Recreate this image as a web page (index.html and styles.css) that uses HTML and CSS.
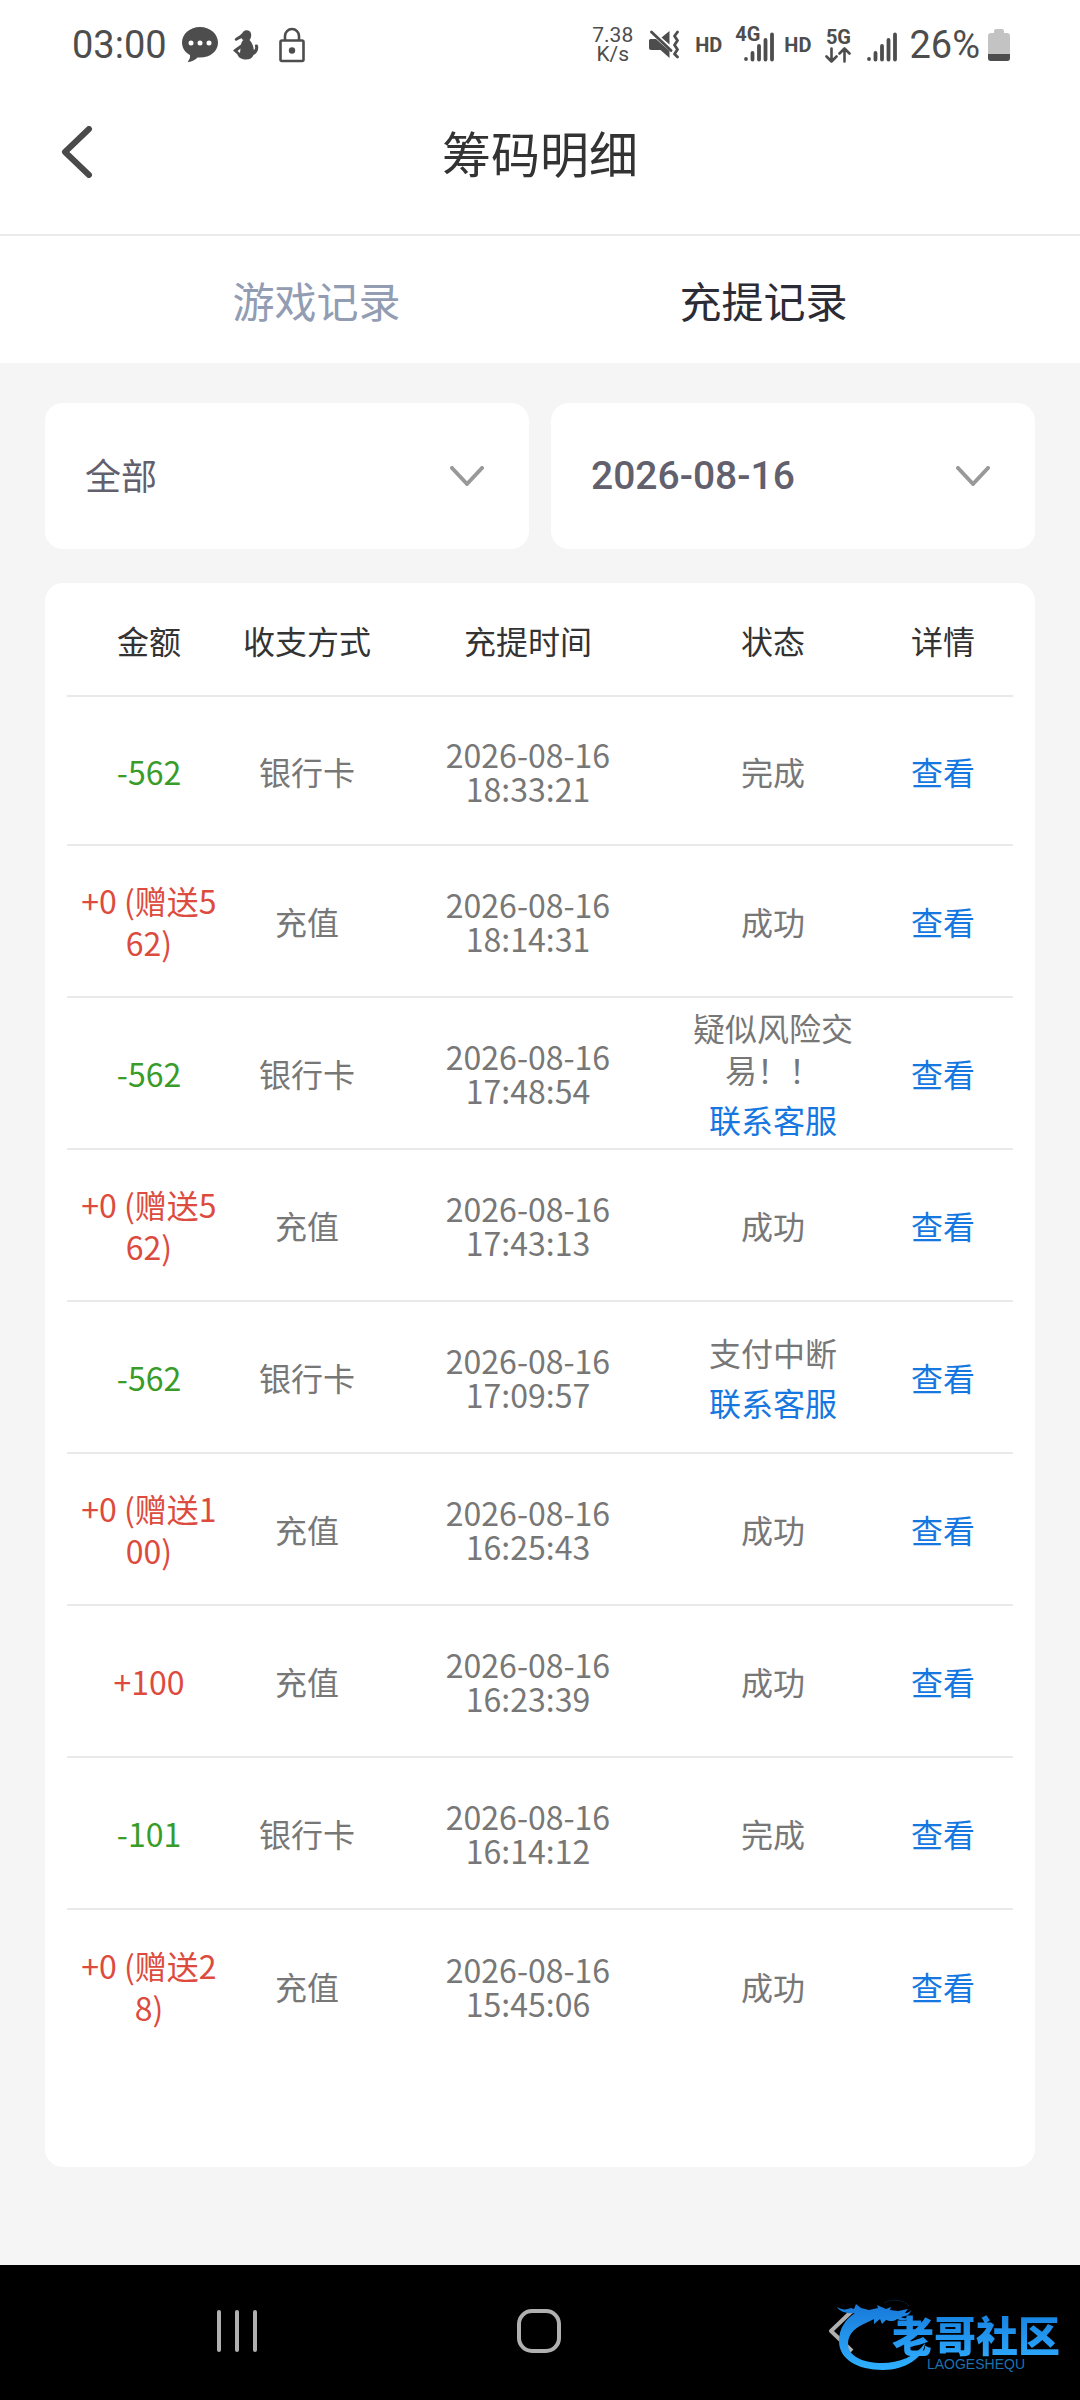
FILE: index.html
```html
<!DOCTYPE html>
<html lang="zh-CN">
<head>
<meta charset="utf-8">
<meta name="viewport" content="width=device-width, initial-scale=1">
<title>筹码明细</title>
<link rel="stylesheet" href="styles.css">
</head>
<body>
<div class="status-bar">
  <div class="status-left">
    <span class="status-time">03:00</span>
    <svg class="icon-chat" width="36" height="36" viewBox="0 0 36 36"><path fill="#4d4d4d" d="M18 0C8 0 0 7 0 15.500c0 5.500 3.200 10 8 12.500.4 2.500-.6 4.500-1.800 6-.4.700 0 1.300.8 1.100 3.800-.9 6.500-2.600 8.500-4.600C27 31.500 36 25 36 15.500 36 7 28 0 18 0z"/><g fill="#fff"><circle cx="9" cy="16" r="2.500"/><circle cx="18" cy="16" r="2.500"/><circle cx="27" cy="16" r="2.500"/></g></svg>
    <svg class="icon-figure" width="26" height="30" viewBox="0 0 26 30"><path fill="#4d4d4d" d="M10 2c2-2.500 7-2.500 8 1.500.5 2.500 0 5-1.500 6.500 2.500 2.500 4 6 4.300 10 1.500-1 1.700-2.500 1-4.500 0-1.500 3-1.500 3.200 0 .8 4-.5 7.500-4.500 9.500-1 3-4 4.500-7.500 4.500-5 0-8-2.500-8.500-5L0 20.500c2-2 5.500-4 8-6 .5-2 1-3.500 2.500-4.500C9 9.500 8.600 9 8.500 8L3 11 1.500 9.500C4 6 7 6.500 10 2zM7.500 18.500L4.500 21 7 23z"/></svg>
    <svg class="icon-lock" width="26" height="36" viewBox="0 0 26 36" fill="none" stroke="#4d4d4d" stroke-width="2.600"><rect x="1.500" y="13.500" width="23" height="20.500" rx="1.500"/><path d="M6 13V9a7 7 0 0 1 14 0v4"/><circle cx="13" cy="23.500" r="3.200" fill="#4d4d4d" stroke="none"/></svg>
  </div>
  <div class="status-right">
    <span class="net-speed">7.38<br>K/s</span>
    <svg class="icon-mute" width="30" height="30" viewBox="0 0 30 30"><path fill="#4d4d4d" d="M12.500 7.500L20.500 1v13.500zM0 10.500C0 9.500 1 9 2 9h5l13.500 12v7l-9-8H2c-1 0-2-.8-2-2z"/><path d="M2.500 2L22 20.500M28.500 2l-3 4 3 4.500-3 4.500 3 4.500-3 4.500 3 3" fill="none" stroke="#4d4d4d" stroke-width="2.800" stroke-linecap="round" stroke-linejoin="round"/></svg>
    <span class="net-tag net-hd">HD</span>
    <span class="signal-4g">
      <svg width="30" height="30" viewBox="0 0 30 30" fill="none" stroke="#4d4d4d" stroke-width="3.800" stroke-linecap="round"><path d="M2 27v.1M8.500 21v6.500M15 14v13.500M21.500 8v19.500M28 2.500v25"/></svg>
      <span class="net-tag signal-4g-label">4G</span>
    </span>
    <span class="net-tag net-hd net-hd-second">HD</span>
    <span class="signal-5g">
      <span class="net-tag">5G</span>
      <svg width="26" height="16" viewBox="0 0 26 16" fill="none" stroke="#4d4d4d" stroke-width="2.600" stroke-linecap="round" stroke-linejoin="round"><path d="M6.500 1.500v13M1.500 9.500l5 5 5-5M19.500 14.500v-13M14.500 6.500l5-5 5 5"/></svg>
    </span>
    <svg class="icon-signal" width="30" height="30" viewBox="0 0 30 30" fill="none" stroke="#4d4d4d" stroke-width="3.800" stroke-linecap="round"><path d="M2 27v.1M8.500 21v6.500M15 14v13.500M21.500 8v19.500M28 2.500v25"/></svg>
    <span class="battery-text">26%</span>
    <svg class="icon-battery" width="22" height="32" viewBox="0 0 22 32"><path fill="#c3c3c3" d="M6 2c0-1 .7-2 2-2h6c1.300 0 2 1 2 2v2h3c2 0 3 1 3 3v22c0 2-1 3-3 3H3c-2 0-3-1-3-3V7c0-2 1-3 3-3h3z"/><path fill="#4d4d4d" d="M0 25h22v4c0 2-1 3-3 3H3c-2 0-3-1-3-3z"/></svg>
  </div>
</div>

<header class="page-header">
  <button class="back-button" type="button" aria-label="返回">
    <svg width="32" height="52" viewBox="0 0 32 52" fill="none" stroke="#4a4a4a" stroke-width="6" stroke-linecap="round" stroke-linejoin="round"><path d="M28 3L4 26l24 23"/></svg>
  </button>
  <h1 class="page-title">筹码明细</h1>
</header>

<nav class="tabs">
  <a class="tab" href="#game">游戏记录</a>
  <a class="tab tab-active" href="#funds">充提记录</a>
</nav>

<main class="content">
  <div class="filters">
    <div class="filter">
      <select class="filter-select" aria-label="类型"><option>全部</option></select>
      <svg class="filter-arrow" width="34" height="20" viewBox="0 0 34 20" fill="none" stroke="#999" stroke-width="4" stroke-linecap="round" stroke-linejoin="round"><path d="M2 2l15 16L32 2"/></svg>
    </div>
    <div class="filter">
      <select class="filter-select filter-date" aria-label="日期"><option>2026-08-16</option></select>
      <svg class="filter-arrow" width="34" height="20" viewBox="0 0 34 20" fill="none" stroke="#999" stroke-width="4" stroke-linecap="round" stroke-linejoin="round"><path d="M2 2l15 16L32 2"/></svg>
    </div>
  </div>

  <section class="records-card">
    <table class="records">
      <colgroup><col class="col-amount"><col class="col-method"><col class="col-time"><col class="col-status"><col class="col-detail"></colgroup>
      <thead>
        <tr><th>金额</th><th>收支方式</th><th>充提时间</th><th>状态</th><th>详情</th></tr>
      </thead>
      <tbody>
        <tr><td class="amount amount-out">-562</td><td>银行卡</td><td class="time">2026-08-16 18:33:21</td><td>完成</td><td><a class="link" href="#detail">查看</a></td></tr>
        <tr><td class="amount amount-in">+0 (赠送562)</td><td>充值</td><td class="time">2026-08-16 18:14:31</td><td>成功</td><td><a class="link" href="#detail">查看</a></td></tr>
        <tr><td class="amount amount-out">-562</td><td>银行卡</td><td class="time">2026-08-16 17:48:54</td><td>疑似风险交易！！<a class="link service-link" href="#service">联系客服</a></td><td><a class="link" href="#detail">查看</a></td></tr>
        <tr><td class="amount amount-in">+0 (赠送562)</td><td>充值</td><td class="time">2026-08-16 17:43:13</td><td>成功</td><td><a class="link" href="#detail">查看</a></td></tr>
        <tr><td class="amount amount-out">-562</td><td>银行卡</td><td class="time">2026-08-16 17:09:57</td><td>支付中断<a class="link service-link" href="#service">联系客服</a></td><td><a class="link" href="#detail">查看</a></td></tr>
        <tr><td class="amount amount-in">+0 (赠送100)</td><td>充值</td><td class="time">2026-08-16 16:25:43</td><td>成功</td><td><a class="link" href="#detail">查看</a></td></tr>
        <tr><td class="amount amount-in">+100</td><td>充值</td><td class="time">2026-08-16 16:23:39</td><td>成功</td><td><a class="link" href="#detail">查看</a></td></tr>
        <tr><td class="amount amount-out">-101</td><td>银行卡</td><td class="time">2026-08-16 16:14:12</td><td>完成</td><td><a class="link" href="#detail">查看</a></td></tr>
        <tr><td class="amount amount-in">+0 (赠送28)</td><td>充值</td><td class="time">2026-08-16 15:45:06</td><td>成功</td><td><a class="link" href="#detail">查看</a></td></tr>
      </tbody>
    </table>
  </section>
</main>

<footer class="nav-bar">
  <button class="nav-button" type="button" aria-label="最近任务"><svg width="44" height="44" viewBox="0 0 44 44" fill="none" stroke="#b0b0b0" stroke-width="4" stroke-linecap="round"><path d="M4 3v38M22 3v38M40 3v38"/></svg></button>
  <button class="nav-button" type="button" aria-label="主页"><svg width="44" height="44" viewBox="0 0 44 44" fill="none" stroke="#b0b0b0" stroke-width="4"><rect x="2" y="2" width="40" height="40" rx="13"/></svg></button>
  <button class="nav-button" type="button" aria-label="返回"><svg width="26" height="44" viewBox="0 0 26 44" fill="none" stroke="#b0b0b0" stroke-width="4" stroke-linejoin="round"><path d="M24 2L3 22l21 20"/></svg></button>
  <div class="watermark">
    <svg class="watermark-dragon" width="96" height="80" viewBox="0 0 96 80">
      <defs><linearGradient id="dragon" x1="0" y1="0" x2="0" y2="1"><stop offset="0" stop-color="#1878d8"/><stop offset="1" stop-color="#2fb0ff"/></linearGradient></defs>
      <path fill="url(#dragon)" d="M0 8c5 3 9 3 14 1l3 1 2-5 5 4 8 2 9-2-1-3 9 4 5-2-1 3 8 1 10-2-3 4c4 0 5-2 6-3-1 5-5 6-10 7 3 2 6 1 9 0-3 4-8 4-13 2-3 3-8 2-11 1l-4 4-2-5-6 5v-5l-6 3C19 28 11 34 11 45c0 12 15 19 34 19 17 0 33-6 43-20-1 14-19 27-42 27C20 71 2 60 2 42 2 29 9 20 18 14 10 15 3 13 0 8z"/>
      <path d="M47 4C55-1 68 1 72 7" fill="none" stroke="#061a2c" stroke-width="1"/>
    </svg>
    <div class="watermark-text">
      <span class="watermark-name">老哥社区</span>
      <span class="watermark-latin">LAOGESHEQU</span>
    </div>
  </div>
</footer>
</body>
</html>
```

FILE: styles.css
```css
* { box-sizing: border-box; }

body {
  margin: 0;
  min-height: 100vh;
  display: flex;
  flex-direction: column;
  background: #f5f5f5;
  font-family: "Noto Sans CJK SC", sans-serif;
  font-size: 32px;
  color: #777;
}

svg { display: block; flex: none; }

button {
  border: 0;
  padding: 0;
  background: none;
  display: flex;
  align-items: center;
  justify-content: center;
}

a { text-decoration: none; }

/* System status bar */
.status-bar {
  display: flex;
  justify-content: space-between;
  align-items: center;
  height: 90px;
  padding: 0 70px 0 72px;
  background: #fff;
  color: #4d4d4d;
  font-family: Roboto, sans-serif;
}

.status-left, .status-right { display: flex; align-items: center; }
.status-left { gap: 15px; }
.status-time, .battery-text { font-size: 38px; line-height: 48px; }
.icon-lock { margin-left: 5px; }
.net-speed { font-size: 21px; line-height: 19px; text-align: center; }
.net-tag { font-size: 20px; line-height: 20px; font-weight: 700; }
.icon-mute { margin-left: 16px; }
.net-hd { margin-left: 16px; }
.signal-4g { position: relative; margin-left: 22px; padding-top: 4px; }
.signal-4g-label { position: absolute; left: -9px; top: -4px; }
.net-hd-second { margin-left: 10px; }
.net-hd + .signal-5g { margin-left: 14px; }
.signal-5g { display: flex; flex-direction: column; align-items: center; }
.icon-signal { margin: 4px 12px 0 16px; }
.icon-battery { margin-left: 8px; }

/* Page header */
.page-header {
  display: grid;
  grid-template-columns: 1fr auto 1fr;
  align-items: center;
  height: 146px;
  padding: 0 61px 20px;
  background: #fff;
  border-bottom: 2px solid #ebebeb;
}

.back-button { justify-self: start; }

.page-title {
  margin: 0;
  font-size: 49px;
  line-height: 64px;
  font-weight: 400;
  color: #333;
}

.tabs {
  display: flex;
  height: 127px;
  padding: 0 93px;
  background: #fff;
}

.tab {
  flex: 1;
  text-align: center;
  font-size: 42px;
  line-height: 127px;
  color: #929db3;
}

.tab-active { color: #2c2c36; }

.content {
  flex: 1;
  display: flex;
  flex-direction: column;
  gap: 34px;
  padding: 40px 45px 98px;
}

/* Filters */
.filters { display: grid; grid-template-columns: 1fr 1fr; gap: 22px; }

.filter {
  display: grid;
  align-items: center;
  height: 146px;
  background: #fff;
  border-radius: 18px;
}

.filter-select, .filter-arrow { grid-area: 1 / 1; }

.filter-select {
  appearance: none;
  width: 100%;
  height: 100%;
  border: 0;
  padding: 0 90px 4px 40px;
  background: none;
  font: 36px "Noto Sans CJK SC", sans-serif;
  color: #62606d;
}

.filter-date {
  padding-bottom: 0;
  font: 500 39px Roboto, sans-serif;
}

.filter-arrow { justify-self: end; margin-right: 45px; pointer-events: none; }

/* Records */
.records-card {
  flex: 1;
  padding: 0 22px 100px;
  background: #fff;
  border-radius: 18px;
}

.records {
  width: 100%;
  table-layout: fixed;
  border-collapse: separate;
  border-spacing: 0;
  text-align: center;
  line-height: 42px;
}

.col-amount { width: 164px; }
.col-method { width: 152px; }
.col-time { width: 290px; }
.col-status { width: 200px; }
.col-detail { width: 140px; }

.records th {
  height: 114px;
  padding: 2px 0 0;
  font-weight: 400;
  color: #333;
  border-bottom: 2px solid #e8e9eb;
}

.records td {
  height: 152px;
  padding: 0 10px;
  border-bottom: 2px solid #e8e9eb;
}

.records tbody tr:first-child td { height: 149px; }
.records tbody tr:last-child td { border-bottom: 0; }
.records .time { line-height: 34px; padding: 0 60px; }
.amount { word-break: break-all; }
.amount-out { color: #3a9c28; }
.amount-in { color: #dc4b3e; }
.link { color: #1677e0; }
.service-link { display: block; margin-top: 8px; }

/* System navigation bar */
.nav-bar {
  position: relative;
  display: grid;
  grid-template-columns: repeat(3, 1fr);
  height: 135px;
  padding: 0 88px 4px 86px;
  background: #000;
}

.watermark {
  position: absolute;
  right: 20px;
  top: 34px;
  display: flex;
}

.watermark-dragon { margin-right: -41px; }

.watermark-text {
  display: flex;
  flex-direction: column;
  align-items: center;
  padding-top: 12px;
}

.watermark-name {
  font-size: 42px;
  line-height: 46px;
  font-weight: 900;
  background: linear-gradient(#1680e0, #2ca6fa);
  background-clip: text;
  color: transparent;
}

.watermark-latin {
  font: 14px/14px "Liberation Sans", sans-serif;
  color: #1a70b0;
}
```
